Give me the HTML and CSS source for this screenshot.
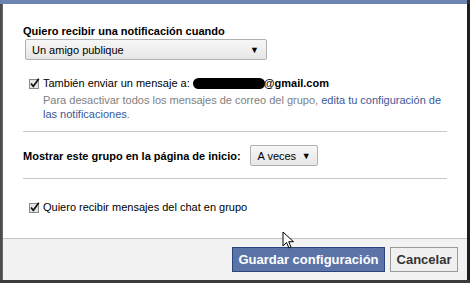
FILE: index.html
```html
<!DOCTYPE html>
<html>
<head>
<meta charset="utf-8">
<link rel="stylesheet" href="styles.css">
</head>
<body>
<div class="screen">
  <div class="topbar"></div>
  <div class="middle">
    <div class="edge-left"></div>
    <div class="dialog">
      <div class="body">
        <div class="title">Quiero recibir una notificación cuando</div>
        <div class="select wide"><span>Un amigo publique</span><span class="arrow">▼</span></div>
        <div class="check-row email-row">
          <span class="cb"><svg width="11" height="11" viewBox="0 0 11 11"><rect x="0.5" y="1.5" width="9" height="9" fill="#e6e6e6" stroke="#8a8a8a"/><path d="M2 5.5 L4.3 8.3 L9.8 0.8" fill="none" stroke="#111" stroke-width="1.7"/></svg></span>
          <span class="label">También enviar un mensaje a: <span class="blob"></span><b class="mail">@gmail.com</b></span>
        </div>
        <div class="help">Para desactivar todos los mensajes de correo del grupo, <a>edita tu configuración de las notificaciones</a>.</div>
        <div class="sep first"></div>
        <div class="home-row">
          <span class="bold">Mostrar este grupo en la página de inicio:</span>
          <div class="select small"><span>A veces</span><span class="arrow">▼</span></div>
        </div>
        <div class="sep"></div>
        <div class="check-row chat-row">
          <span class="cb"><svg width="11" height="11" viewBox="0 0 11 11"><rect x="0.5" y="1.5" width="9" height="9" fill="#e6e6e6" stroke="#8a8a8a"/><path d="M2 5.5 L4.3 8.3 L9.8 0.8" fill="none" stroke="#111" stroke-width="1.7"/></svg></span>
          <span class="label">Quiero recibir mensajes del chat en grupo</span>
        </div>
      </div>
      <div class="footer">
        <button class="btn primary">Guardar configuración</button>
        <button class="btn secondary">Cancelar</button>
      </div>
    </div>
    <div class="edge-right"></div>
  </div>
  <div class="bottom"></div>
  <svg class="cursor" width="14" height="20" viewBox="0 0 14 20"><path d="M1 1 L1 15 L4.5 11.5 L7 17 L9 16 L6.7 10.7 L11.5 10.7 Z" fill="#fff" stroke="#000" stroke-width="1" stroke-linejoin="round"/></svg>
</div>
</body>
</html>
```
FILE: styles.css
```css
* { box-sizing: border-box; }
html, body { margin: 0; padding: 0; }
body { background: #2e2e2e; font-family: "Liberation Sans", Arial, sans-serif; font-size: 11px; color: #333; }
.screen { position: relative; width: 470px; height: 283px; overflow: hidden; display: flex; flex-direction: column; }
.topbar { height: 4px; width: 467px; background: #6d84b4; flex: none; }
.middle { display: flex; height: 276px; flex: none; }
.edge-left { width: 3px; background: #4d4d4d; border-right: 1px solid #6a6a6a; }
.edge-right { width: 3px; background: #1e1e1e; }
.bottom { flex: 1; background: #3a3a3a; }
.dialog { width: 464px; background: #fff; display: flex; flex-direction: column; }
.body { flex: 1; padding: 21px 20px 0 20px; }
.title { font-weight: bold; color: #000; font-size: 11px; line-height: 13px; }
.select { display: flex; justify-content: space-between; align-items: center; border: 1px solid #b0b0b0; border-radius: 2px; background: linear-gradient(#f7f7f7, #e6e6e6); color: #000; font-size: 11px; }
.select .arrow { font-size: 9px; }
.select.wide { width: 242px; height: 21px; margin: 1px 0 0 2px; padding: 0 7px 0 6px; }
.select.small { width: 68px; height: 21px; padding: 0 6px 0 7px; }
.check-row { display: flex; align-items: center; color: #000; }
.check-row .cb { width: 14px; margin-left: 6px; display: flex; }
.email-row { margin-top: 17px; }
.mail { font-weight: bold; }
.blob { display: inline-block; width: 72px; height: 11px; background: #000; border-radius: 6px; vertical-align: -2px; margin-right: -1px; }
.help { color: #808080; margin: 4px 0 0 20px; line-height: 14px; width: 400px; }
.help a { color: #3b5998; }
.sep { height: 1px; background: #c8c8c8; margin: 0; }
.sep.first { margin-top: 10px; }
.home-row { display: flex; align-items: center; gap: 9px; margin-top: 13px; margin-bottom: 12px; }
.bold { font-weight: bold; color: #000; }
.chat-row { margin-top: 22px; }
.footer { height: 42px; border-top: 1px solid #c4c4c4; background: #f2f2f2; display: flex; justify-content: flex-end; align-items: center; gap: 5px; padding: 0 9px 0 0; }
.btn { font-family: "Liberation Sans", Arial, sans-serif; font-weight: bold; font-size: 13px; height: 25px; padding: 0 5px; border-radius: 0; }
.btn.primary { background: #5b74a8; border: 1px solid #29447e; color: #fff; width: 153px; }
.btn.secondary { background: #f0f0f0; border: 1px solid #999; color: #333; width: 68px; }
.cursor { position: absolute; left: 282px; top: 231px; }
```
